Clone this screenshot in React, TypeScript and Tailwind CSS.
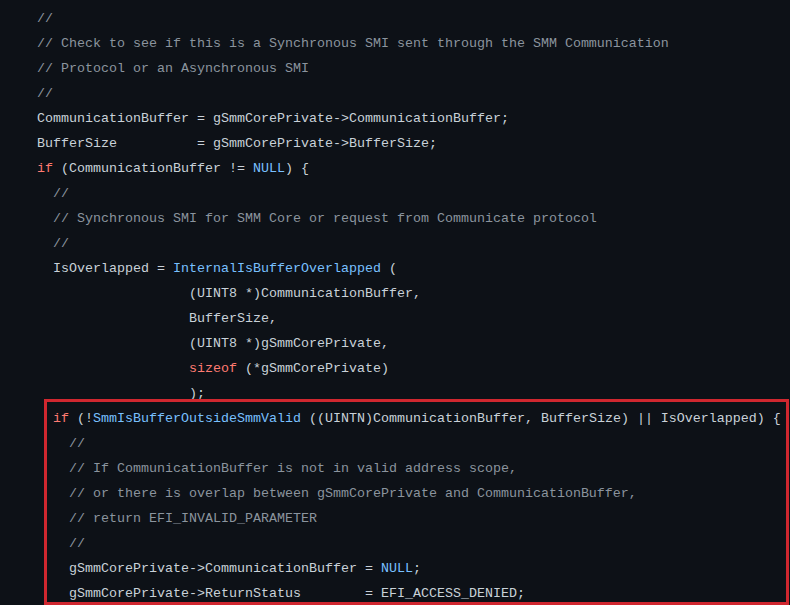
import React from 'react';

type Tok = [string, string?];

const C = {
  txt: 'text-[#c9d1d9]',
  com: 'text-[#8b949e]',
  kw: 'text-[#ff7b72]',
  fn: 'text-[#79c0ff]',
};

const lines: Tok[][] = [
  [['//', 'com']],
  [['// Check to see if this is a Synchronous SMI sent through the SMM Communication', 'com']],
  [['// Protocol or an Asynchronous SMI', 'com']],
  [['//', 'com']],
  [['CommunicationBuffer = gSmmCorePrivate->CommunicationBuffer;']],
  [['BufferSize          = gSmmCorePrivate->BufferSize;']],
  [['if', 'kw'], [' (CommunicationBuffer != '], ['NULL', 'fn'], [') {']],
  [['  //', 'com']],
  [['  // Synchronous SMI for SMM Core or request from Communicate protocol', 'com']],
  [['  //', 'com']],
  [['  IsOverlapped = '], ['InternalIsBufferOverlapped', 'fn'], [' (']],
  [['                   (UINT8 *)CommunicationBuffer,']],
  [['                   BufferSize,']],
  [['                   (UINT8 *)gSmmCorePrivate,']],
  [['                   '], ['sizeof', 'kw'], [' (*gSmmCorePrivate)']],
  [['                   );']],
  [['  '], ['if', 'kw'], [' (!'], ['SmmIsBufferOutsideSmmValid', 'fn'], [' ((UINTN)CommunicationBuffer, BufferSize) || IsOverlapped) {']],
  [['    //', 'com']],
  [['    // If CommunicationBuffer is not in valid address scope,', 'com']],
  [['    // or there is overlap between gSmmCorePrivate and CommunicationBuffer,', 'com']],
  [['    // return EFI_INVALID_PARAMETER', 'com']],
  [['    //', 'com']],
  [['    gSmmCorePrivate->CommunicationBuffer = '], ['NULL', 'fn'], [';']],
  [['    gSmmCorePrivate->ReturnStatus        = EFI_ACCESS_DENIED;']],
];

export default function App() {
  return (
    <div className="w-[795px] h-[610px] bg-white overflow-hidden">
      <div className="relative w-[790px] h-[605px] bg-[#0d1117] overflow-hidden">
        <pre
          className="pt-[6px] pl-[37px] text-[13.33px] leading-[25px] text-[#c9d1d9] whitespace-pre"
          style={{ fontFamily: '"Liberation Mono", "DejaVu Sans Mono", monospace' }}
        >
          {lines.map((line, i) => (
            <div key={i}>
              {line.map(([s, k], j) => (
                <span key={j} className={C[(k ?? 'txt') as keyof typeof C]}>
                  {s}
                </span>
              ))}
              {line.length === 0 ? ' ' : null}
            </div>
          ))}
        </pre>
        {/* highlight box */}
        <div className="absolute left-[44px] top-[399px] w-[745px] h-[206px] border-[3px] border-[#d0272f]" />
      </div>
    </div>
  );
}
